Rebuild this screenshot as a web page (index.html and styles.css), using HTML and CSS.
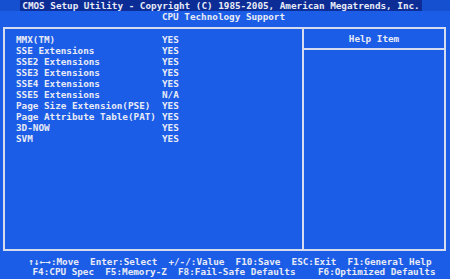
FILE: index.html
```html
<!DOCTYPE html>
<html>
<head>
<meta charset="utf-8">
<link rel="stylesheet" href="styles.css">
</head>
<body>
<div class="screen">
  <div class="top"><span class="title">CMOS Setup Utility - Copyright (C) 1985-2005, American Megatrends, Inc.</span></div>
  <div class="subtitle">CPU Technology Support</div>
  <div class="frame">
    <div class="main">
      <div class="row"><span class="label">MMX(TM)</span><span class="val">YES</span></div>
      <div class="row"><span class="label">SSE Extensions</span><span class="val">YES</span></div>
      <div class="row"><span class="label">SSE2 Extensions</span><span class="val">YES</span></div>
      <div class="row"><span class="label">SSE3 Extensions</span><span class="val">YES</span></div>
      <div class="row"><span class="label">SSE4 Extensions</span><span class="val">YES</span></div>
      <div class="row"><span class="label">SSE5 Extensions</span><span class="val">N/A</span></div>
      <div class="row"><span class="label">Page Size Extension(PSE)</span><span class="val">YES</span></div>
      <div class="row"><span class="label">Page Attribute Table(PAT)</span><span class="val">YES</span></div>
      <div class="row"><span class="label">3D-NOW</span><span class="val">YES</span></div>
      <div class="row"><span class="label">SVM</span><span class="val">YES</span></div>
    </div>
    <div class="help">
      <div class="help-head">Help Item</div>
      <div class="help-body"></div>
    </div>
  </div>
  <div class="footer">
    <div class="fline fline-1">↑↓←→:Move  Enter:Select  +/-/:Value  F10:Save  ESC:Exit  F1:General Help</div>
    <div class="fline fline-2">F4:CPU Spec  F5:Memory-Z  F8:Fail-Safe Defaults    F6:Optimized Defaults</div>
  </div>
</div>
</body>
</html>
```
FILE: styles.css
```css
html, body {
  margin: 0;
  padding: 0;
  background: #1b5de6;
}
.screen {
  width: 450px;
  height: 279px;
  overflow: hidden;
  background: #1b5de6;
  color: #e8ebf6;
  font-family: "DejaVu Sans Mono", "Liberation Mono", monospace;
  font-weight: bold;
  font-size: 9.3px;
}
.top {
  height: 11px;
  display: flex;
  justify-content: center;
  background: #1550d0;
  padding-right: 8px;
}
.title {
  background: #0c2d96;
  line-height: 11px;
  padding: 0 2px;
  white-space: pre;
}
.subtitle {
  height: 14px;
  line-height: 12px;
  text-align: center;
  padding-right: 3px;
}
.frame {
  margin: 2px 0 0 3px;
  width: 439px;
  height: 220px;
  border: 2px solid #d6dcef;
  display: flex;
}
.main {
  width: 299px;
  border-right: 2px solid #d6dcef;
  padding: 5px 0 0 11px;
  box-sizing: border-box;
}
.row {
  display: flex;
  height: 11px;
  line-height: 11px;
  white-space: pre;
}
.label {
  width: 146px;
}
.help {
  flex: 1;
  display: flex;
  flex-direction: column;
}
.help-head {
  height: 19px;
  line-height: 19px;
  text-align: center;
  border-bottom: 2px solid #d6dcef;
}
.footer {
  padding-top: 6px;
}
.fline {
  height: 10px;
  line-height: 10px;
  text-align: center;
  white-space: pre;
}
.fline-1 {
  padding-left: 10px;
}
.fline-2 {
  padding-left: 18px;
}
```
